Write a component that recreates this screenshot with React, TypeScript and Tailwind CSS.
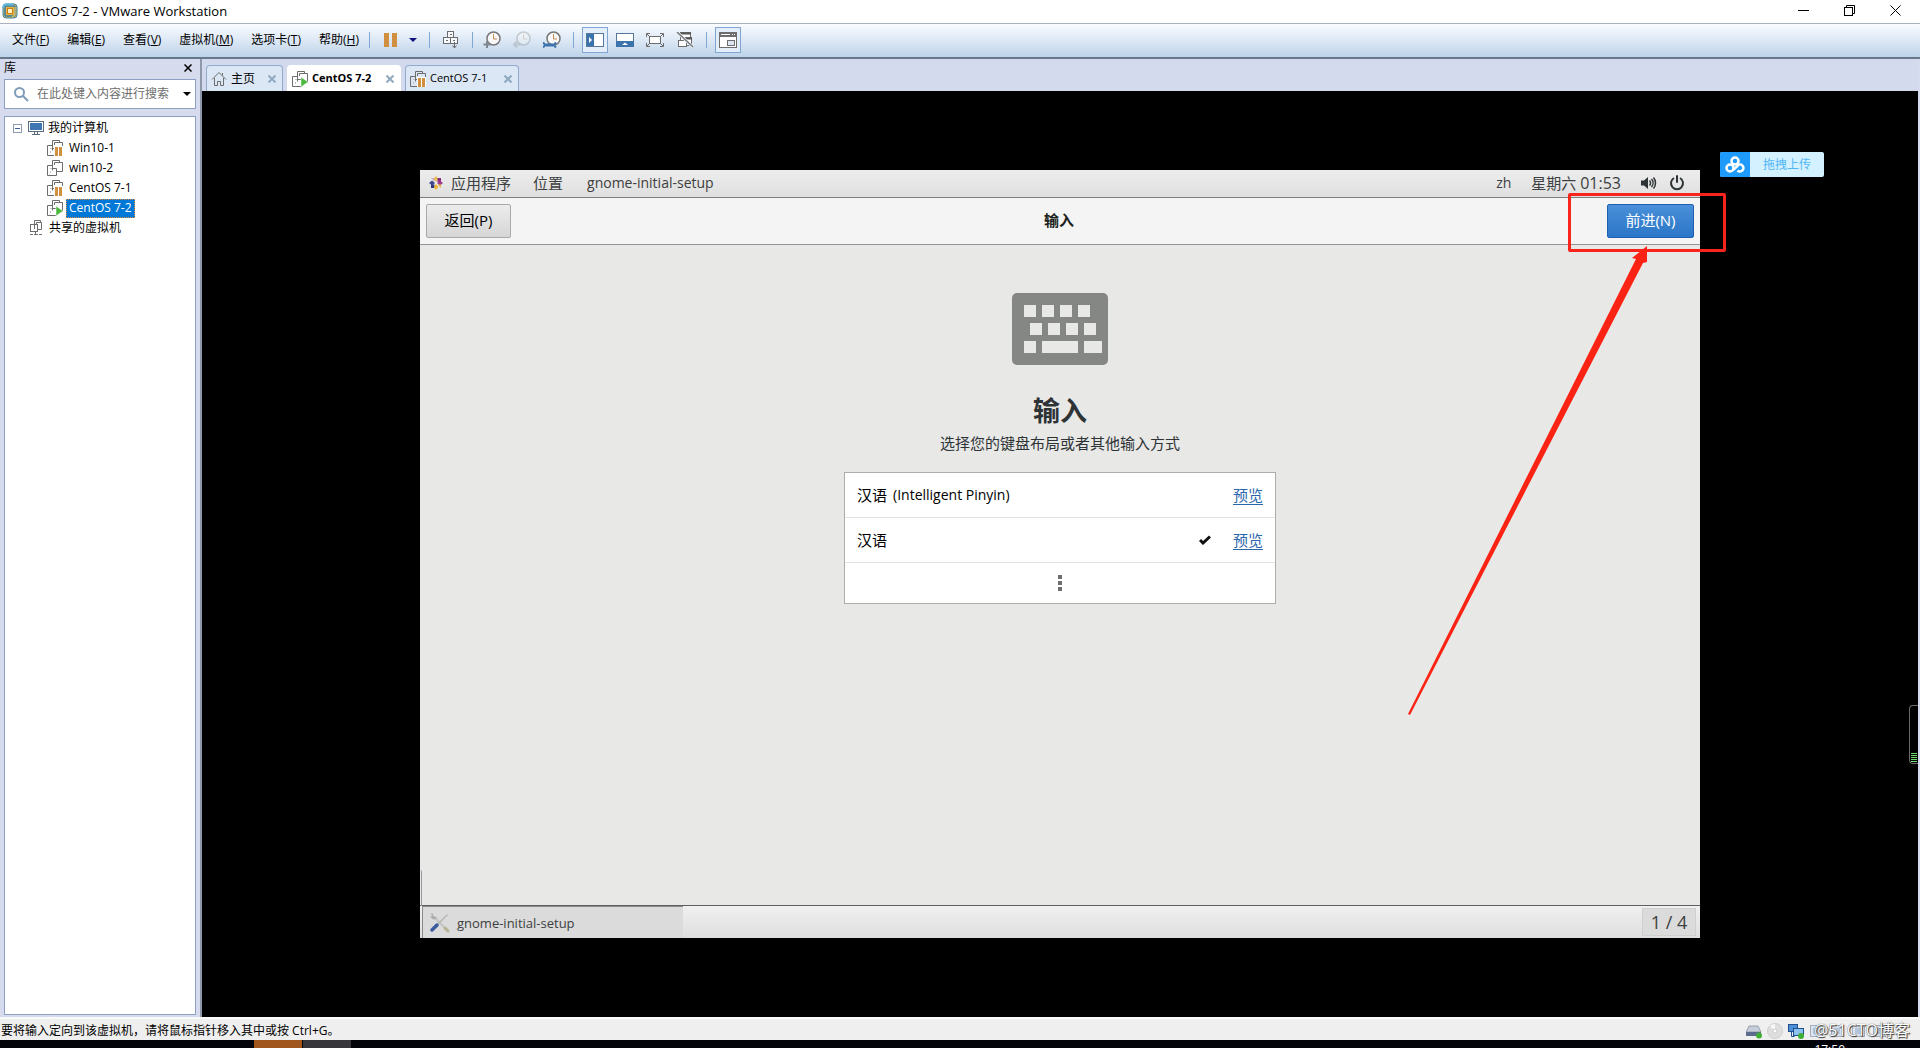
import type { ReactNode } from 'react';
import clsx from 'clsx';

type VmState = 'paused' | 'running' | 'off';

const MENUS = [
  { label: '文件', key: 'F' },
  { label: '编辑', key: 'E' },
  { label: '查看', key: 'V' },
  { label: '虚拟机', key: 'M' },
  { label: '选项卡', key: 'T' },
  { label: '帮助', key: 'H' },
];

const MACHINES: { name: string; state: VmState; selected?: boolean }[] = [
  { name: 'Win10-1', state: 'paused' },
  { name: 'win10-2', state: 'off' },
  { name: 'CentOS 7-1', state: 'paused' },
  { name: 'CentOS 7-2', state: 'running', selected: true },
];

const LAYOUTS = [
  { name: '汉语', variant: '(Intelligent Pinyin)', checked: false },
  { name: '汉语', variant: '', checked: true },
];

/* ---------- icons ---------- */

function VmwareLogo() {
  return (
    <svg width="16" height="16" viewBox="0 0 16 16" fill="none">
      <rect x="1" y="1" width="14" height="14" rx="3" fill="#f0b23c" stroke="#2f86b5" />
      <rect x="3" y="3" width="10" height="10" rx="1" stroke="#2a7fb0" strokeWidth="1.5" />
      <path d="M1.5 5V3.500a2 2 0 0 1 2-2H11" stroke="#5fb7dc" strokeWidth="2" />
      <rect x="5.500" y="5.500" width="5" height="5" fill="#fff3c4" stroke="#c7801a" />
      <path d="M13 4v8l-3 2" stroke="#f7d264" />
    </svg>
  );
}

function VmIcon({ state }: { state: VmState }) {
  return (
    <svg width="16" height="16" viewBox="0 0 16 16" fill="none" className="shrink-0">
      <path d="M5.500 10.500V.5h7v2" stroke="#6d6d6d" />
      <path d="M7.500 5V2.500h8v9H10" stroke="#6d6d6d" />
      <path d="M5 5.500H.5v10h9v-7H6" stroke="#6d6d6d" />
      <path d="M3 8.500h2M3.500 11v2" stroke="#c2c2c2" />
      {state === 'paused' && (
        <>
          <rect x="7" y="6" width="9" height="10" fill="#fff" />
          <rect x="8" y="7" width="3" height="9" fill="#d0903f" />
          <rect x="12" y="7" width="3" height="9" fill="#d0903f" />
        </>
      )}
      {state === 'running' && <path d="M9 6l7 5-7 5z" fill="#4ab83c" stroke="#fff" strokeWidth=".5" />}
    </svg>
  );
}

function HomeIcon() {
  return (
    <svg width="16" height="16" viewBox="0 0 16 16" fill="none" stroke="#6d6d6d">
      <path d="M1 8.500L8 1.500l7 7" />
      <path d="M3.500 7v7.500h3v-4h3v4h3V7" />
      <path d="M11.500 2v2.500" />
    </svg>
  );
}

function MonitorIcon() {
  return (
    <svg width="16" height="16" viewBox="0 0 16 16" fill="none" className="shrink-0">
      <rect x=".5" y="1.500" width="15" height="10" fill="#fff" stroke="#5b6b7c" />
      <rect x="2" y="3" width="12" height="7" fill="#3f77b4" />
      <path d="M6.500 12v2.500M9.500 12v2.500M4 14.500h8" stroke="#5b6b7c" />
    </svg>
  );
}

function SharedIcon() {
  return (
    <svg width="16" height="16" viewBox="0 0 16 16" fill="none" stroke="#6d6d6d" className="shrink-0">
      <path d="M5.500 9V.5h6V2" />
      <path d="M7.500 4V2.500h5v7H9" />
      <rect x="1.500" y="4.500" width="7" height="7" />
      <path d="M6.500 12v2.500" />
      <path d="M1 14.500h3M5 14.500h4M10 14.500h3" />
    </svg>
  );
}

function SearchIcon() {
  return (
    <svg width="16" height="16" viewBox="0 0 16 16" fill="none" stroke="#7f9cb8" strokeWidth="2">
      <circle cx="6.500" cy="6.500" r="4.500" />
      <path d="M10 10l5 5" />
    </svg>
  );
}

function ClockIcon({ faded, children }: { faded?: boolean; children: ReactNode }) {
  return (
    <svg width="18" height="18" viewBox="0 0 18 18" fill="none" className={clsx(faded && 'opacity-30')}>
      <circle cx="10.500" cy="7.500" r="6.500" fill="#f8f8f8" stroke="#777" strokeWidth="1.500" />
      <path d="M10.500 3v5H14" stroke="#c08a50" />
      {children}
    </svg>
  );
}

function SendKeysIcon() {
  return (
    <svg width="18" height="18" viewBox="0 0 18 18" fill="#f6f8fb" stroke="#6d6d6d">
      <rect x="5.500" y=".5" width="6" height="6" />
      <rect x="1.500" y="6.500" width="7" height="6" />
      <rect x="8.500" y="6.500" width="7" height="6" />
      <path d="M12.500 11v6M10.500 14.500l2 2.500 2-2.500M4 9.500h2M11 9.500h2M8 3.500h2" fill="none" />
    </svg>
  );
}

function LibraryViewIcon() {
  return (
    <svg width="18" height="14" viewBox="0 0 18 14" fill="none">
      <rect x=".5" y=".5" width="17" height="13" fill="#fff" stroke="#56779c" />
      <rect x="1" y="1" width="7" height="12" fill="#3d73ad" />
      <path d="M3 4l3 3-3 3z" fill="#fff" />
    </svg>
  );
}

function ThumbnailViewIcon() {
  return (
    <svg width="18" height="14" viewBox="0 0 18 14" fill="none">
      <rect x=".5" y=".5" width="17" height="13" fill="#fff" stroke="#56779c" />
      <rect x="0" y="8" width="18" height="6" fill="#3d73ad" />
      <path d="M6 12l3-2.500 3 2.500z" fill="#fff" />
    </svg>
  );
}

function FullscreenIcon() {
  return (
    <svg width="18" height="14" viewBox="0 0 18 14" fill="none" stroke="#6d6d6d">
      <rect x="3.500" y="3.500" width="11" height="7" fill="#fff" />
      <path d="M.5 4V.5H4M14 .5h3.500V4M17.500 10v3.500H14M4 13.500H.5V10M1 1l2 2M17 1l-2 2M17 13l-2-2M1 13l2-2" />
    </svg>
  );
}

function UnityIcon() {
  return (
    <svg width="18" height="16" viewBox="0 0 18 16" fill="none" stroke="#6d6d6d">
      <rect x="4.500" y=".5" width="10" height="8" fill="#fff" />
      <path d="M4 1.500h11" stroke="#555" strokeWidth="2" />
      <rect x="7.500" y="5.500" width="8" height="8" fill="#fff" />
      <path d="M7 6.500h9" stroke="#555" strokeWidth="2" />
      <rect x="2.500" y="8.500" width="8" height="6" fill="#fff" />
      <path d="M1 0l16 15" stroke="#e9f1fa" strokeWidth="3" />
      <path d="M1 0l16 15" stroke="#777" strokeWidth="1.500" />
    </svg>
  );
}

function ConsoleIcon() {
  return (
    <svg width="18" height="16" viewBox="0 0 18 16" fill="none">
      <rect x=".5" y=".5" width="17" height="15" fill="#fff" stroke="#6d6d6d" />
      <rect x="0" y="0" width="18" height="5" fill="#6d6d6d" />
      <path d="M2 2.500h9M13 2.500h1M15 2.500h1" stroke="#fff" />
      <rect x="8.500" y="8.500" width="7" height="5" fill="#dbe6f2" stroke="#6d6d6d" />
    </svg>
  );
}

function CentosIcon() {
  return (
    <svg width="14" height="14" viewBox="0 0 14 14">
      <path d="M7 0l2.500 3L7 6 4.500 3z" fill="#e8c34a" />
      <path d="M14 7l-3 2.500L8 7l3-2.500z" fill="#a23a90" />
      <path d="M7 14l-2.500-3L7 8l2.500 3z" fill="#f0b43c" />
      <path d="M0 7l3-2.500L6 7 3 9.500z" fill="#3f4590" />
      <path d="M8.500 2H12v3.500L8.500 6z" fill="#8c2d84" />
      <path d="M8.500 8.500H12V12z" fill="#e3b04a" />
      <path d="M2 8.500h3.500L5 12H2z" fill="#35377c" />
      <path d="M2 2h3.500v3.500z" fill="#c9a7c4" />
    </svg>
  );
}

function VolumeIcon() {
  return (
    <svg width="16" height="14" viewBox="0 0 16 14" fill="none" stroke="#2e3436">
      <path d="M0 4.500h3L7 1v12L3 9.500H0z" fill="#2e3436" stroke="none" />
      <path d="M8.500 4.500a3.500 3.500 0 0 1 0 5" strokeWidth="1.500" />
      <path d="M10.500 3a6 6 0 0 1 0 8" strokeWidth="1.500" />
      <path d="M12.500 1.500a8.500 8.500 0 0 1 0 11" strokeWidth="1.500" />
    </svg>
  );
}

function PowerIcon() {
  return (
    <svg width="16" height="16" viewBox="0 0 16 16" fill="none" stroke="#2e3436" strokeWidth="2">
      <path d="M5 3a6 6 0 1 0 6 0" />
      <path d="M8 1v6" strokeLinecap="round" />
    </svg>
  );
}

function KeyboardIcon() {
  return (
    <svg width="96" height="72" viewBox="0 0 96 72" className="shrink-0">
      <rect width="96" height="72" rx="5" fill="#858785" />
      <g fill="#e8e8e7">
        {[12, 30, 48, 66].map((x) => (
          <rect key={x} x={x} y="12" width="12" height="12" />
        ))}
        {[18, 36, 54, 72].map((x) => (
          <rect key={x} x={x} y="30" width="12" height="12" />
        ))}
        <rect x="12" y="48" width="12" height="12" />
        <rect x="30" y="48" width="36" height="12" />
        <rect x="72" y="48" width="18" height="12" />
      </g>
    </svg>
  );
}

function ToolsIcon() {
  return (
    <svg width="22" height="20" viewBox="0 0 22 20" fill="none" strokeLinecap="round">
      <path d="M5 4l12 12" stroke="#c3c6c2" strokeWidth="2" />
      <path d="M3 1l1 3 3 1M2 4l3 2" stroke="#a9aca8" strokeWidth="1.500" />
      <path d="M18 2l-9 9" stroke="#b4b7b3" strokeWidth="1.500" />
      <path d="M8 12l-5 5" stroke="#3c5ca0" strokeWidth="3.500" />
      <path d="M16 15l3 3" stroke="#b5b496" strokeWidth="3" />
    </svg>
  );
}

function DiskIcon() {
  return (
    <svg width="16" height="16" viewBox="0 0 16 16">
      <path d="M3 3h9l3 6H0z" fill="#c7cedb" stroke="#7f8797" strokeWidth=".7" />
      <rect x="0" y="9" width="15" height="4" fill="#5c6c8c" />
      <circle cx="13" cy="12.500" r="3" fill="#3fae35" />
    </svg>
  );
}

function DiscIcon() {
  return (
    <svg width="16" height="16" viewBox="0 0 16 16">
      <circle cx="8" cy="8" r="7.500" fill="#dedede" stroke="#cfcfcf" />
      <path d="M8 8L3 3a7 7 0 0 1 5-2z" fill="#f8f8f8" />
      <circle cx="8" cy="8" r="2" fill="#fff" stroke="#ccc" />
    </svg>
  );
}

function NetworkIcon() {
  return (
    <svg width="16" height="16" viewBox="0 0 16 16">
      <rect x=".5" y="1.500" width="9" height="7" fill="#4d8fd6" stroke="#1f4f8e" />
      <path d="M3.500 9v4.500h3" fill="none" stroke="#1f4f8e" />
      <rect x="5.500" y="5.500" width="10" height="7" fill="#8cc2f0" stroke="#1f4f8e" />
      <circle cx="13" cy="13" r="3" fill="#3fae35" />
    </svg>
  );
}

function DeviceIcon() {
  return (
    <svg width="16" height="16" viewBox="0 0 16 16">
      <rect x="1.500" y="2.500" width="12" height="11" fill="#dde4ee" stroke="#a3afc0" />
      <rect x="4" y="5" width="6" height="6" fill="#b5c5da" />
    </svg>
  );
}

/* ---------- host window ---------- */

function TitleBar() {
  return (
    <header className="flex h-[23px] shrink-0 items-center bg-white pr-0.5 pb-0.5 pl-0.5">
      <VmwareLogo />
      <h1 className="ml-1 flex-1 text-[13px] leading-4">CentOS 7-2 - VMware Workstation</h1>
      <div className="flex h-full text-black">
        <button aria-label="最小化" className="flex w-[46px] items-center justify-center">
          <svg width="11" height="11" viewBox="0 0 11 11" stroke="currentColor">
            <path d="M0 5.500h11" />
          </svg>
        </button>
        <button aria-label="还原" className="flex w-[46px] items-center justify-center">
          <svg width="11" height="11" viewBox="0 0 11 11" fill="none" stroke="currentColor">
            <rect x=".5" y="2.500" width="8" height="8" />
            <path d="M2.500 2V.5h8v8H9" />
          </svg>
        </button>
        <button aria-label="关闭" className="flex w-[46px] items-center justify-center">
          <svg width="11" height="11" viewBox="0 0 11 11" stroke="currentColor">
            <path d="M.5.5l10 10M10.500.5l-10 10" />
          </svg>
        </button>
      </div>
    </header>
  );
}

function Separator() {
  return <span className="h-4 w-px shrink-0 bg-[#7fa8d4]" />;
}

function ToolButton({ label, active, children }: { label: string; active?: boolean; children: ReactNode }) {
  return (
    <button
      aria-label={label}
      className={clsx(
        'flex h-[26px] w-[26px] items-center justify-center border',
        active ? 'border-[#7fa6d3] bg-[#e3eefa]' : 'border-transparent',
      )}
    >
      {children}
    </button>
  );
}

function MenuBar() {
  return (
    <div className="flex h-9 shrink-0 items-center border-t border-b-2 border-t-[#a9b3bf] border-b-[#66788a] bg-linear-to-b from-[#fafcff] via-[#dce8f5] to-[#bdd3e8] pb-0.5 pl-3">
      <nav className="flex gap-[18px]">
        {MENUS.map((menu) => (
          <button key={menu.key} className="whitespace-nowrap">
            {menu.label}(<u>{menu.key}</u>)
          </button>
        ))}
      </nav>
      <div className="ml-2.5 flex items-center">
        <Separator />
        <button aria-label="挂起" className="ml-3.5 flex gap-[3px]">
          <span className="h-3.5 w-[5px] bg-[#d0903f]" />
          <span className="h-3.5 w-[5px] bg-[#d0903f]" />
        </button>
        <button aria-label="电源选项" className="mx-3 border-x-4 border-t-4 border-x-transparent border-t-[#10107a]" />
        <Separator />
        <span className="w-2" />
        <ToolButton label="发送 Ctrl+Alt+Del">
          <SendKeysIcon />
        </ToolButton>
        <span className="w-2" />
        <Separator />
        <div className="mr-2 ml-1.5 flex gap-1">
          <ToolButton label="拍摄快照">
            <ClockIcon>
              <path d="M4 10v7M.5 13.500h7" stroke="#7c8790" strokeWidth="2" />
            </ClockIcon>
          </ToolButton>
          <ToolButton label="恢复快照">
            <ClockIcon faded>
              <path d="M1 13.500h8M4 10.500l-3 3 3 3" stroke="#888" strokeWidth="2" />
            </ClockIcon>
          </ToolButton>
          <ToolButton label="管理快照">
            <ClockIcon>
              <path d="M3 14h7" stroke="#3d73ad" strokeWidth="3" />
              <path d="M0 11.500l2.500 2.500L0 16.500M13 11.500L10.500 14l2.500 2.500" stroke="#3d73ad" strokeWidth="2" />
            </ClockIcon>
          </ToolButton>
        </div>
        <Separator />
        <div className="mx-2 flex gap-1">
          <ToolButton label="显示库" active>
            <LibraryViewIcon />
          </ToolButton>
          <ToolButton label="缩略图栏">
            <ThumbnailViewIcon />
          </ToolButton>
          <ToolButton label="全屏">
            <FullscreenIcon />
          </ToolButton>
          <ToolButton label="Unity">
            <UnityIcon />
          </ToolButton>
        </div>
        <Separator />
        <span className="w-2" />
        <ToolButton label="控制台视图" active>
          <ConsoleIcon />
        </ToolButton>
      </div>
    </div>
  );
}

function Library() {
  return (
    <aside className="flex w-[202px] shrink-0 flex-col border-r-2 border-[#8e98ab] bg-[#d6dbee] px-1 pb-0.5">
      <div className="flex h-5 items-center justify-between pr-1 pb-0.5">
        <h2>库</h2>
        <button aria-label="关闭库">
          <svg width="8" height="8" viewBox="0 0 8 8" stroke="#000" strokeWidth="1.500">
            <path d="M.5.5l7 7M7.500.5l-7 7" />
          </svg>
        </button>
      </div>
      <div className="flex h-[30px] items-center border border-[#8ba0c2] bg-white pr-1 pl-2">
        <SearchIcon />
        <input
          aria-label="搜索"
          placeholder="在此处键入内容进行搜索"
          className="ml-2 min-w-0 flex-1 outline-none placeholder:text-[#6d6d6d]"
        />
        <button aria-label="搜索选项" className="border-x-4 border-t-4 border-x-transparent border-t-black" />
      </div>
      <div className="mt-[7px] flex-1 border border-[#8ba0c2] bg-white pt-px">
        <ul className="leading-5">
          <li>
            <div className="flex items-center pl-2">
              <button aria-label="折叠" className="mr-1.5 flex h-[9px] w-[9px] items-center justify-center border border-[#8c9bb0]">
                <span className="h-px w-[5px] bg-[#3c5a8c]" />
              </button>
              <MonitorIcon />
              <span className="ml-1">我的计算机</span>
            </div>
            <ul>
              {MACHINES.map((vm) => (
                <li key={vm.name} className="flex h-5 items-center pl-[42px]">
                  <VmIcon state={vm.state} />
                  <button
                    className={clsx(
                      'ml-[3px] h-[19px] border px-0.5 leading-4 whitespace-nowrap',
                      vm.selected ? 'border-dotted border-[#e08a3a] bg-[#0078d7] text-white' : 'border-transparent',
                    )}
                  >
                    {vm.name}
                  </button>
                </li>
              ))}
            </ul>
          </li>
          <li className="flex items-center pl-6">
            <SharedIcon />
            <span className="ml-1">共享的虚拟机</span>
          </li>
        </ul>
      </div>
    </aside>
  );
}

function Tab({ icon, label, active, wide }: { icon: ReactNode; label: string; active?: boolean; wide?: boolean }) {
  return (
    <div
      className={clsx(
        'flex h-[26px] items-center rounded-t-sm border border-b-0 pr-1.5 pl-1',
        active ? 'border-white bg-white font-bold' : 'border-[#8fabcd] bg-[#dce7f6]',
        wide ? 'w-[114px]' : 'w-[77px]',
      )}
    >
      <button className="flex min-w-0 flex-1 items-center gap-1 whitespace-nowrap">
        {icon}
        <span className={clsx(wide && 'text-[11px]')}>{label}</span>
      </button>
      <button aria-label={`关闭 ${label}`}>
        <svg width="8" height="8" viewBox="0 0 8 8" stroke="#8fa9bf" strokeWidth="2">
          <path d="M.5.5l7 7M7.500.5l-7 7" />
        </svg>
      </button>
    </div>
  );
}

/* ---------- guest desktop ---------- */

function GuestTopPanel() {
  return (
    <div className="flex h-7 shrink-0 items-center border-b border-[#7d7d7d] bg-linear-to-b from-[#ededed] to-[#dfdfdf] pr-[15px] pb-px pl-[9px] text-[#3c4041]">
      <button className="flex items-center gap-2">
        <CentosIcon />
        应用程序
      </button>
      <button className="ml-[22px]">位置</button>
      <button className="ml-6 text-sm">gnome-initial-setup</button>
      <span className="ml-auto text-sm">zh</span>
      <time className="mr-5 ml-5">
        星期六 <span className="text-base leading-5">01:53</span>
      </time>
      <VolumeIcon />
      <span className="w-3" />
      <PowerIcon />
    </div>
  );
}

function SetupHeader() {
  return (
    <div className="flex h-[47px] shrink-0 items-center justify-between border-b border-[#959595] bg-[#f4f4f4] px-1.5">
      <button className="h-[34px] w-[85px] rounded-xs border border-[#a9a9a9] bg-linear-to-b from-[#ececec] to-[#d6d6d6] pb-0.5">
        返回(P)
      </button>
      <h2 className="pb-0.5 font-bold text-[#1c1f20]">输入</h2>
      <button className="h-[34px] w-[87px] rounded-xs border border-[#1f5fae] bg-linear-to-b from-[#4a90d9] to-[#2a76c8] pb-0.5 text-white">
        前进(N)
      </button>
    </div>
  );
}

function LayoutList() {
  return (
    <ul className="mt-[19px] w-[432px] border border-[#adadad] bg-white text-black">
      {LAYOUTS.map((layout) => (
        <li key={layout.name + layout.variant} className="flex h-[45px] items-center border-b border-[#e2e2e2] px-3">
          <button className="flex flex-1 items-center gap-1.5 text-left">
            {layout.name}
            {layout.variant && <span className="text-sm">{layout.variant}</span>}
          </button>
          {layout.checked && (
            <svg width="12" height="10" viewBox="0 0 12 10" fill="none" stroke="#111" strokeWidth="3" className="mr-[22px]">
              <path d="M1 5l3 3 7-6.500" />
            </svg>
          )}
          <a href="#preview" className="border-b border-[#2a66ad] leading-[18px] text-[#2a66ad]">
            预览
          </a>
        </li>
      ))}
      <li>
        <button aria-label="更多" className="flex h-10 w-full flex-col items-center justify-center gap-0.5">
          <span className="h-1 w-1 bg-[#6e6e6e]" />
          <span className="h-1 w-1 bg-[#6e6e6e]" />
          <span className="h-1 w-1 bg-[#6e6e6e]" />
        </button>
      </li>
    </ul>
  );
}

function GuestTaskbar() {
  return (
    <div className="relative flex h-[33px] shrink-0 items-center justify-between border-t border-[#5f5f5f] bg-linear-to-b from-[#f0f0f0] to-[#dedede] pr-1 pl-0.5 text-[#3c4041]">
      {/* edge of the window behind */}
      <span className="absolute bottom-full left-0 h-9 w-0.5 rounded-tr-xs border-r border-[#9a9a9a]" />
      <button className="flex h-8 w-[261px] items-center gap-1.5 border-t border-l border-[#8a8a8a] bg-[#dbdbdb] pl-1.5 text-[13px]">
        <ToolsIcon />
        gnome-initial-setup
      </button>
      <button className="h-7 w-[54px] border border-[#cfcfcf] bg-[#dbdbdb] text-lg leading-6">1 / 4</button>
    </div>
  );
}

/* Red marker pointing at the next button */
function Annotation() {
  return (
    <>
      <div className="pointer-events-none absolute top-[23px] -right-[26px] h-[59px] w-[158px] rounded-xs border-3 border-[#f9251c]" />
      <svg
        width="250"
        height="470"
        viewBox="0 0 250 470"
        className="pointer-events-none absolute top-[76px] right-[42px]"
        fill="#fb2313"
      >
        <path d="M239 0l-15 12 4 1L0 468l2 1L235 17l4-1z" />
      </svg>
    </>
  );
}

function GuestScreen() {
  return (
    <div className="relative flex aspect-5/3 w-full max-w-7xl flex-col bg-[#e8e8e7] text-[15px] leading-5">
      <GuestTopPanel />
      <SetupHeader />
      <section className="flex flex-1 flex-col items-center pt-12 text-[#2e3436]">
        <KeyboardIcon />
        <h3 className="mt-7 text-[27px] leading-9 font-bold">输入</h3>
        <p className="mt-1">选择您的键盘布局或者其他输入方式</p>
        <LayoutList />
      </section>
      <GuestTaskbar />
      <Annotation />
    </div>
  );
}

function UploadBadge() {
  return (
    <button className="absolute top-[61px] right-[94px] flex h-[25px] w-[104px] items-center overflow-hidden rounded-xs bg-[#d3f1ff] text-[#52b6f5]">
      <span className="flex h-full w-[30px] items-center justify-center bg-[#1e9bfa]">
        <svg width="20" height="18" viewBox="0 0 20 18" fill="none" stroke="#fff" strokeWidth="2.500">
          <circle cx="10" cy="5" r="3.500" />
          <circle cx="5" cy="12" r="3.500" />
          <path d="M8 14l5-4.500M12.500 9.500a3.500 3.500 0 1 1 0 5" />
        </svg>
      </span>
      <span className="flex-1 text-center">拖拽上传</span>
    </button>
  );
}

function LevelGauge() {
  return (
    <div className="absolute top-[614px] right-0 flex h-[59px] w-[9px] flex-col justify-end gap-px rounded-l-sm border border-r-0 border-[#6a6a6a] p-px">
      {[0, 1, 2, 3, 4].map((i) => (
        <span key={i} className="h-px w-full bg-[#6fdc70]" />
      ))}
    </div>
  );
}

function StatusBar() {
  return (
    <footer className="relative flex h-[23px] shrink-0 items-center border-t-2 border-[#fafafa] bg-[#efefef] pt-0.5 pl-px">
      <span className="flex-1">要将输入定向到该虚拟机，请将鼠标指针移入其中或按 Ctrl+G。</span>
      <div className="flex gap-[5px] pr-8">
        <DiskIcon />
        <DiscIcon />
        <NetworkIcon />
        <DeviceIcon />
        <DeviceIcon />
        <DeviceIcon />
        <DeviceIcon />
      </div>
      <span className="absolute top-px right-2.5 text-base leading-5 text-white [text-shadow:1px_1px_1px_#333,0_0_1px_#333]">
        @51CTO博客
      </span>
    </footer>
  );
}

function HostTaskbar() {
  return (
    <div className="flex h-2 shrink-0 overflow-hidden bg-[#02040a] pl-[254px]">
      <span className="w-12 bg-[#a0561c]" />
      <span className="ml-px w-12 bg-[#37363b]" />
      <time className="mt-1 mr-[75px] ml-auto leading-3 text-white">17:50</time>
    </div>
  );
}

export default function App() {
  return (
    <div className="flex h-screen flex-col overflow-hidden bg-[#d6dbee] font-['Open_Sans','Noto_Sans_CJK_SC',sans-serif] text-xs text-black">
      <TitleBar />
      <MenuBar />
      <div className="flex min-h-0 flex-1">
        <Library />
        <main className="flex min-w-0 flex-1 flex-col pr-0.5">
          <div className="flex h-8 shrink-0 items-end gap-1 bg-[#d3daee] pl-1">
            <Tab icon={<HomeIcon />} label="主页" />
            <Tab icon={<VmIcon state="running" />} label="CentOS 7-2" active wide />
            <Tab icon={<VmIcon state="paused" />} label="CentOS 7-1" wide />
          </div>
          <div className="relative flex flex-1 items-center justify-center bg-black">
            <GuestScreen />
            <UploadBadge />
            <LevelGauge />
          </div>
        </main>
      </div>
      <StatusBar />
      <HostTaskbar />
    </div>
  );
}
